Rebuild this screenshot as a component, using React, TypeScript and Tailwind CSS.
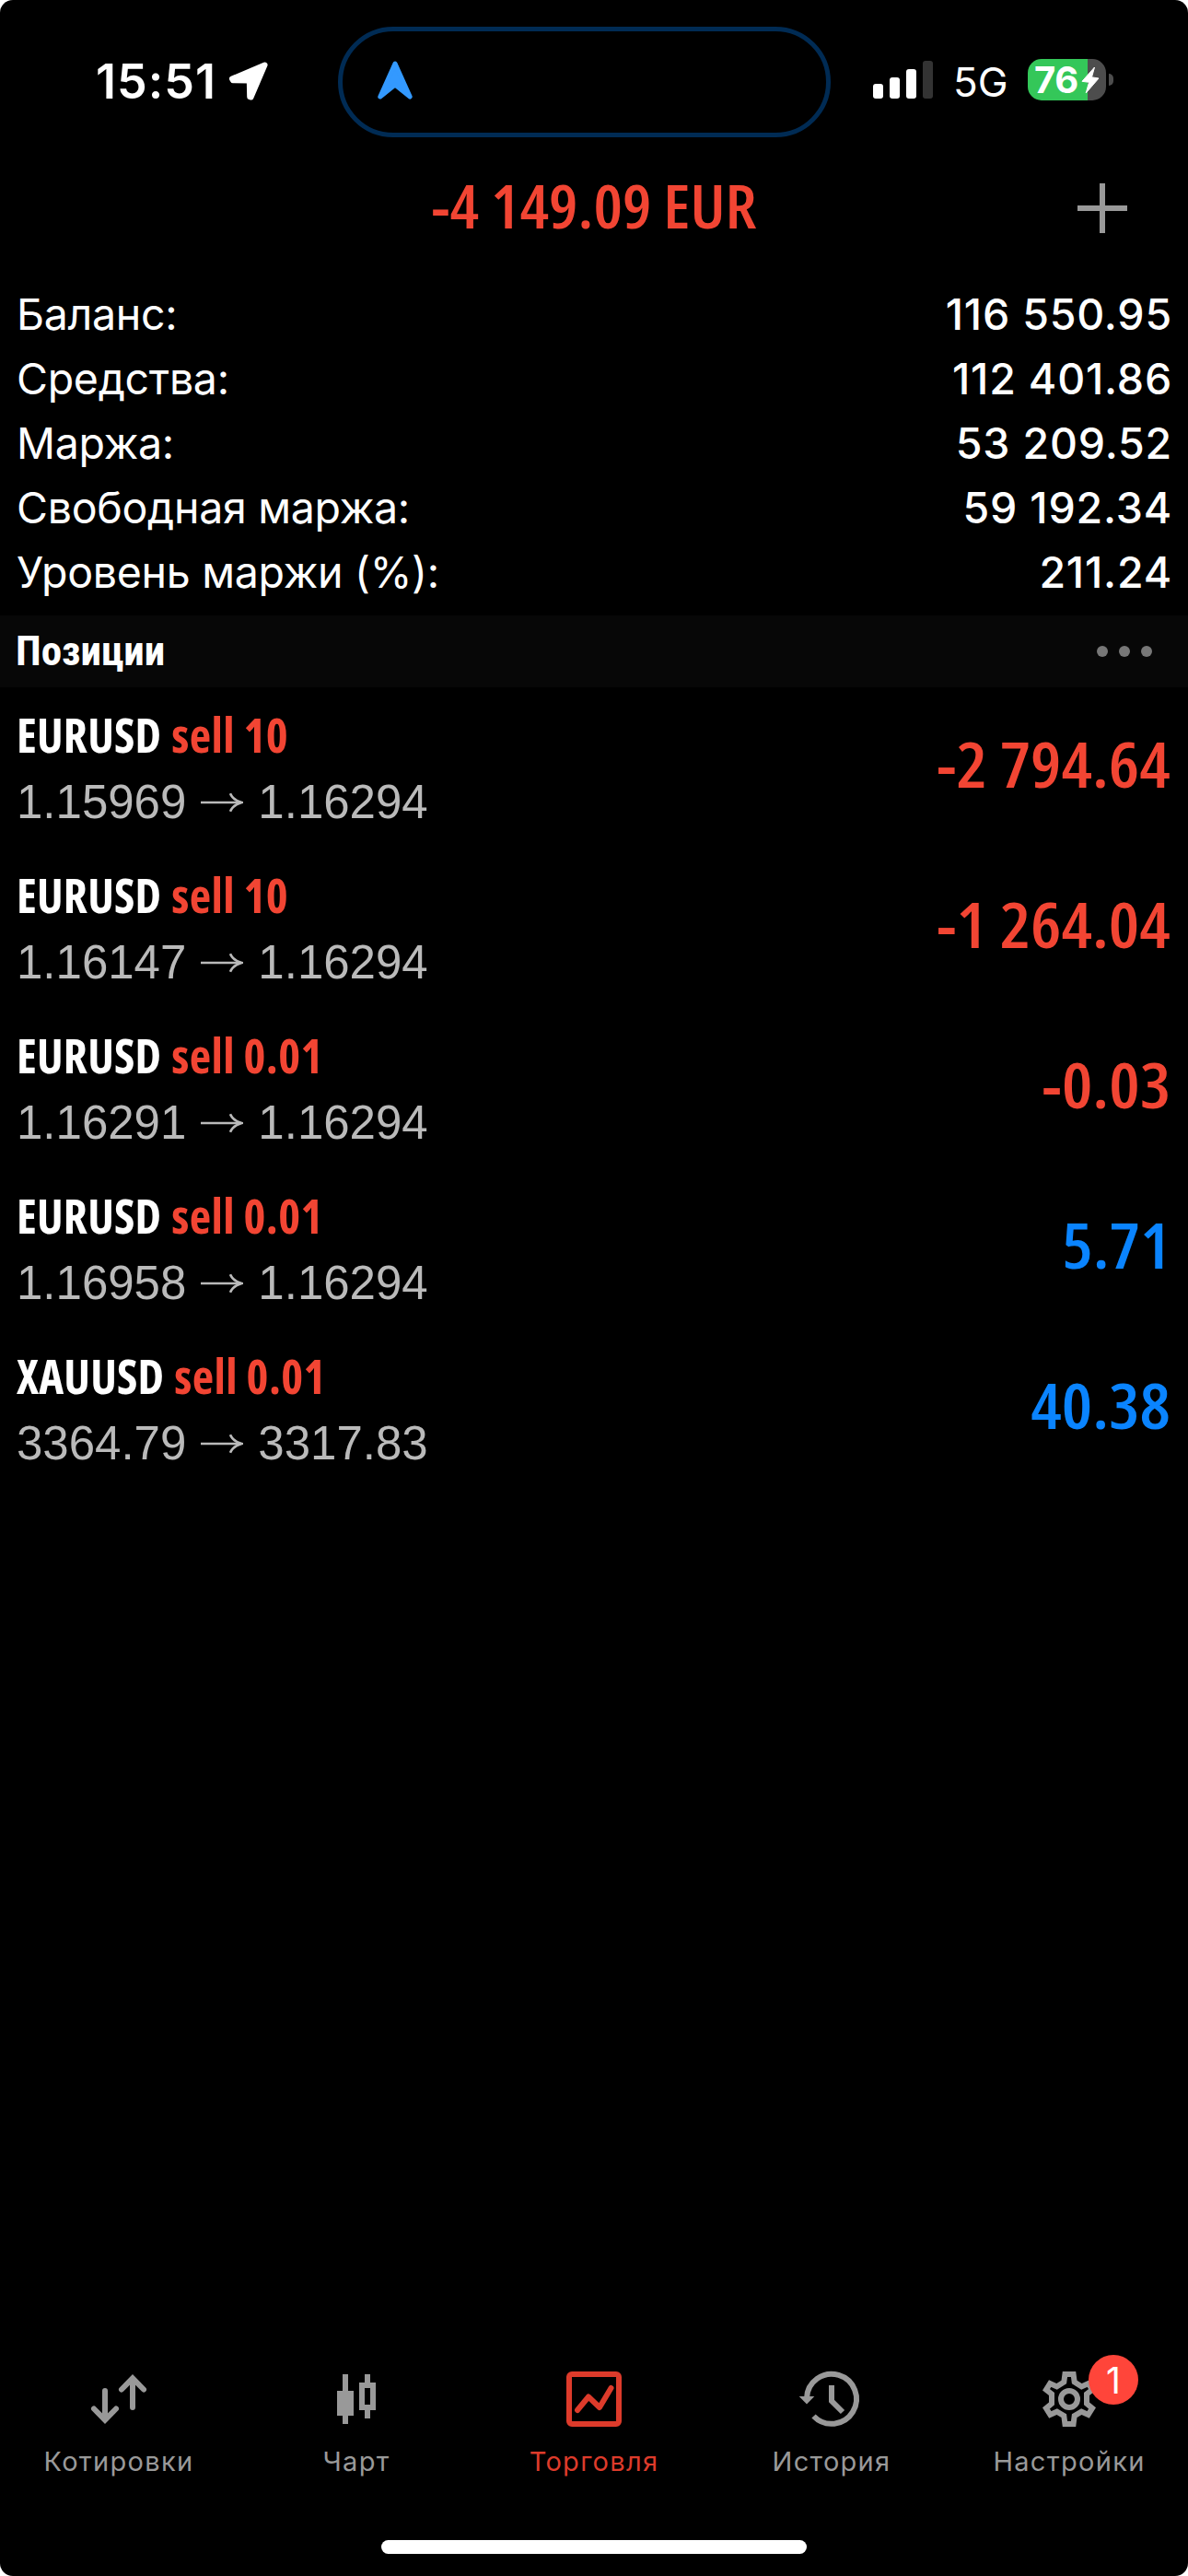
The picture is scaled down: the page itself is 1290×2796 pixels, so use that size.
import { ReactNode } from 'react'
import clsx from 'clsx'

type Position = {
  symbol: string
  side: string
  open: string
  current: string
  profit: string
}

type Tab = {
  label: string
  icon: ReactNode
  active?: boolean
  badge?: number
}

const account = [
  { label: 'Баланс:', value: '116 550.95' },
  { label: 'Средства:', value: '112 401.86' },
  { label: 'Маржа:', value: '53 209.52' },
  { label: 'Свободная маржа:', value: '59 192.34' },
  { label: 'Уровень маржи (%):', value: '211.24' },
]

const positions: Position[] = [
  { symbol: 'EURUSD', side: 'sell 10', open: '1.15969', current: '1.16294', profit: '-2 794.64' },
  { symbol: 'EURUSD', side: 'sell 10', open: '1.16147', current: '1.16294', profit: '-1 264.04' },
  { symbol: 'EURUSD', side: 'sell 0.01', open: '1.16291', current: '1.16294', profit: '-0.03' },
  { symbol: 'EURUSD', side: 'sell 0.01', open: '1.16958', current: '1.16294', profit: '5.71' },
  { symbol: 'XAUUSD', side: 'sell 0.01', open: '3364.79', current: '3317.83', profit: '40.38' },
]

const gearPath =
  'M28.8 6H43.2L44.5 15.7L49.7 19L58 15.3L65 26.5L58 32V39.5L65 45.3L57.8 56.8L49.5 53L44.5 56L43.2 66H28.8L27.5 56L22.5 53L14.2 56.8L7 45.3L14 39.5V32L7 26.5L14 15.3L22.3 19L27.5 15.7Z'

function QuotesIcon() {
  return (
    <svg viewBox="0 0 72 72" className="size-[72px]" fill="none" stroke="currentColor" strokeWidth="6" strokeLinecap="round">
      <path d="M21 27V58M9 46.5L21 58.7L33 46.5" />
      <path d="M51 45V14M39 25.5L51 13.3L63 25.5" />
    </svg>
  )
}

function CandlesIcon() {
  return (
    <svg viewBox="0 0 72 72" className="size-[72px]" fill="currentColor" shapeRendering="crispEdges">
      <path d="M21 9H27V27H33V54H27V63H21V54H15V27H21Z" />
      <path fillRule="evenodd" d="M45 9H51V18H57V48H51V57H45V48H39V18H45ZM45 24V42H51V24Z" />
    </svg>
  )
}

function TradeIcon() {
  return (
    <svg viewBox="0 0 72 72" className="size-[72px]" fill="none" stroke="currentColor" strokeWidth="6">
      <rect x="9" y="9" width="54" height="54" rx="3" />
      <path d="M18 48L30 33.5L42 45L54.5 24" strokeLinecap="round" strokeLinejoin="round" />
    </svg>
  )
}

function HistoryIcon() {
  return (
    <svg viewBox="0 0 72 72" className="size-[72px]" fill="none" stroke="currentColor" strokeWidth="6">
      <path d="M9 35A27 27 0 1 1 16.5 54.5" />
      <path d="M0.7 33H17.3L9 41.5Z" fill="currentColor" stroke="none" />
      <path d="M36 21V38L48 50" />
    </svg>
  )
}

function SettingsIcon() {
  return (
    <svg viewBox="0 0 72 72" className="size-[72px]" fill="none" stroke="currentColor">
      <clipPath id="gear">
        <path d={gearPath} />
      </clipPath>
      <path d={gearPath} strokeWidth="12" clipPath="url(#gear)" />
      <circle cx="36" cy="36" r="9" strokeWidth="6" />
    </svg>
  )
}

const tabs: Tab[] = [
  { label: 'Котировки', icon: <QuotesIcon /> },
  { label: 'Чарт', icon: <CandlesIcon /> },
  { label: 'Торговля', icon: <TradeIcon />, active: true },
  { label: 'История', icon: <HistoryIcon /> },
  { label: 'Настройки', icon: <SettingsIcon />, badge: 1 },
]

function StatusBar() {
  return (
    <div className="flex h-[168px] items-start pl-[104px]">
      <span className="mt-[59px] w-[145px] text-[52px] leading-[60px] font-semibold tracking-[1px]">
        15:51
      </span>
      <svg viewBox="0 0 42 42" className="mt-[67px] size-[42px]" fill="white" stroke="white" strokeWidth="6" strokeLinejoin="round">
        <path d="M38.5 3.5L3 18.5L4 20.3L21.8 20.5L22.2 38.2L23.5 38.5Z" />
      </svg>

      <div className="mt-[29px] ml-[76px] h-[120px] w-[535px] rounded-full border-5 border-[#002b54] pt-8 pl-[38px]">
        <svg viewBox="0 0 38 42" className="h-[42px] w-[38px]" fill="#3399ff" stroke="#3399ff" strokeWidth="5" strokeLinejoin="round">
          <path d="M19 3L2.8 39L19 26L35.2 39Z" />
        </svg>
      </div>

      <div className="mt-[66px] ml-[46px] flex h-[41px] items-end gap-[7px]">
        <div className="h-4 w-[11px] rounded-[3px] bg-white" />
        <div className="h-[23px] w-[11px] rounded-[3px] bg-white" />
        <div className="h-8 w-[11px] rounded-[3px] bg-white" />
        <div className="h-[41px] w-[11px] rounded-[3px] bg-[#333333]" />
      </div>
      <span className="mt-[59px] ml-[22px] w-[81px] text-[44px] leading-[60px]">5G</span>

      <div className="mt-16 flex h-[45px] w-[85px] items-center rounded-[15px] bg-[linear-gradient(90deg,#34c759_65px,#4d4d4d_65px)] pl-[7px]">
        <span className="w-[51px] text-[40px] leading-[45px] font-bold tracking-[-0.5px]">76</span>
        <svg viewBox="0 0 20 30" className="h-[30px] w-5" fill="white" stroke="white" strokeLinejoin="round">
          <path d="M14.5 1L1 16.3L8.5 17.3L5.2 29L19 13L11.5 11.8Z" />
        </svg>
      </div>
      <div className="mt-20 ml-[3px] h-[13px] w-[5px] rounded-r-full bg-[#4d4d4d]" />
    </div>
  )
}

function PositionRow({ position }: { position: Position }) {
  const isLoss = position.profit.startsWith('-')

  return (
    <li className="flex h-[174px] items-center justify-between pt-0.5 pr-[19px] pl-[18px]">
      <div>
        <p className="flex gap-[11px] font-['Open_Sans',sans-serif] text-[51px] leading-[74px] font-bold [font-stretch:75%]">
          <span className="tracking-[0.2px]">{position.symbol}</span>
          <span className="tracking-[0.4px] text-[#f24533]">{position.side}</span>
        </p>
        <p className="flex items-center font-['Liberation_Sans',sans-serif] text-[51px] leading-[74px] text-[#bababa]">
          {position.open}
          <svg viewBox="0 0 46 22" className="mr-4 ml-4 h-[22px] w-[46px]" fill="none" stroke="currentColor" strokeWidth="2.6">
            <path d="M0 11H43" />
            <path d="M32 1.2Q35 8.5 44.5 11Q35 13.5 32 20.8" />
          </svg>
          {position.current}
        </p>
      </div>
      <span
        className={clsx(
          "origin-right scale-x-[1.1] pb-[10px] font-['Open_Sans',sans-serif] text-[68px] leading-[80px] font-semibold [font-stretch:75%]",
          isLoss ? 'text-[#f24533]' : 'text-[#0a84ff]'
        )}
      >
        {position.profit}
      </span>
    </li>
  )
}

function TabBar() {
  return (
    <nav className="grid h-[189px] grid-cols-5">
      {tabs.map((tab) => (
        <div
          key={tab.label}
          className={clsx(
            'flex flex-col items-center gap-[11px]',
            tab.active ? 'text-[#dd3b2b]' : 'text-[#999999]'
          )}
        >
          <div className="relative">
            {tab.icon}
            {tab.badge && (
              <span className="absolute -top-3 left-[57px] flex size-[54px] items-center justify-center rounded-full bg-[#ff453a] text-[39px] leading-none text-white">
                {tab.badge}
              </span>
            )}
          </div>
          <span className="text-[29px] leading-[41px] tracking-[1.3px]">
            {tab.label}
          </span>
        </div>
      ))}
    </nav>
  )
}

export default function App() {
  return (
    <div className="bg-white">
      <main className="flex h-[2796px] w-[1290px] flex-col overflow-hidden rounded-[14px] bg-black font-['Inter',sans-serif] text-white">
        <StatusBar />

        <header className="grid h-[109px] grid-cols-[1fr_auto_1fr] items-center">
          <h1 className="col-start-2 scale-x-[1.085] font-['Open_Sans',sans-serif] text-[65px] leading-[80px] font-semibold text-[#f24533] [font-stretch:75%]">
            -4 149.09 EUR
          </h1>
          <svg viewBox="0 0 54 54" className="mt-[7px] mr-[66px] size-[54px] justify-self-end" stroke="#999999" strokeWidth="6">
            <path d="M27 0V54M0 27H54" />
          </svg>
        </header>

        <section className="pt-[29px] pr-[17px] pb-3 pl-[18px]">
          {account.map((item) => (
            <div
              key={item.label}
              className="flex justify-between text-[46.5px] leading-[70px]"
            >
              <span className="tracking-[-0.3px]">{item.label}</span>
              <span className="font-medium tracking-[0.8px]">{item.value}</span>
            </div>
          ))}
        </section>

        <div className="flex h-[78px] items-center justify-between bg-[#070707] pr-[39px] pl-[17px]">
          <h2 className="font-['Roboto',sans-serif] text-[45px] leading-[78px] font-bold [font-stretch:75%]">
            Позиции
          </h2>
          <div className="flex gap-3">
            <div className="size-3 rounded-full bg-[#777777]" />
            <div className="size-3 rounded-full bg-[#777777]" />
            <div className="size-3 rounded-full bg-[#777777]" />
          </div>
        </div>

        <ul className="flex-1">
          {positions.map((position, index) => (
            <PositionRow key={index} position={position} />
          ))}
        </ul>

        <TabBar />
        <div className="mb-6 h-[15px] w-[462px] self-center rounded-full bg-white" />
      </main>
    </div>
  )
}
